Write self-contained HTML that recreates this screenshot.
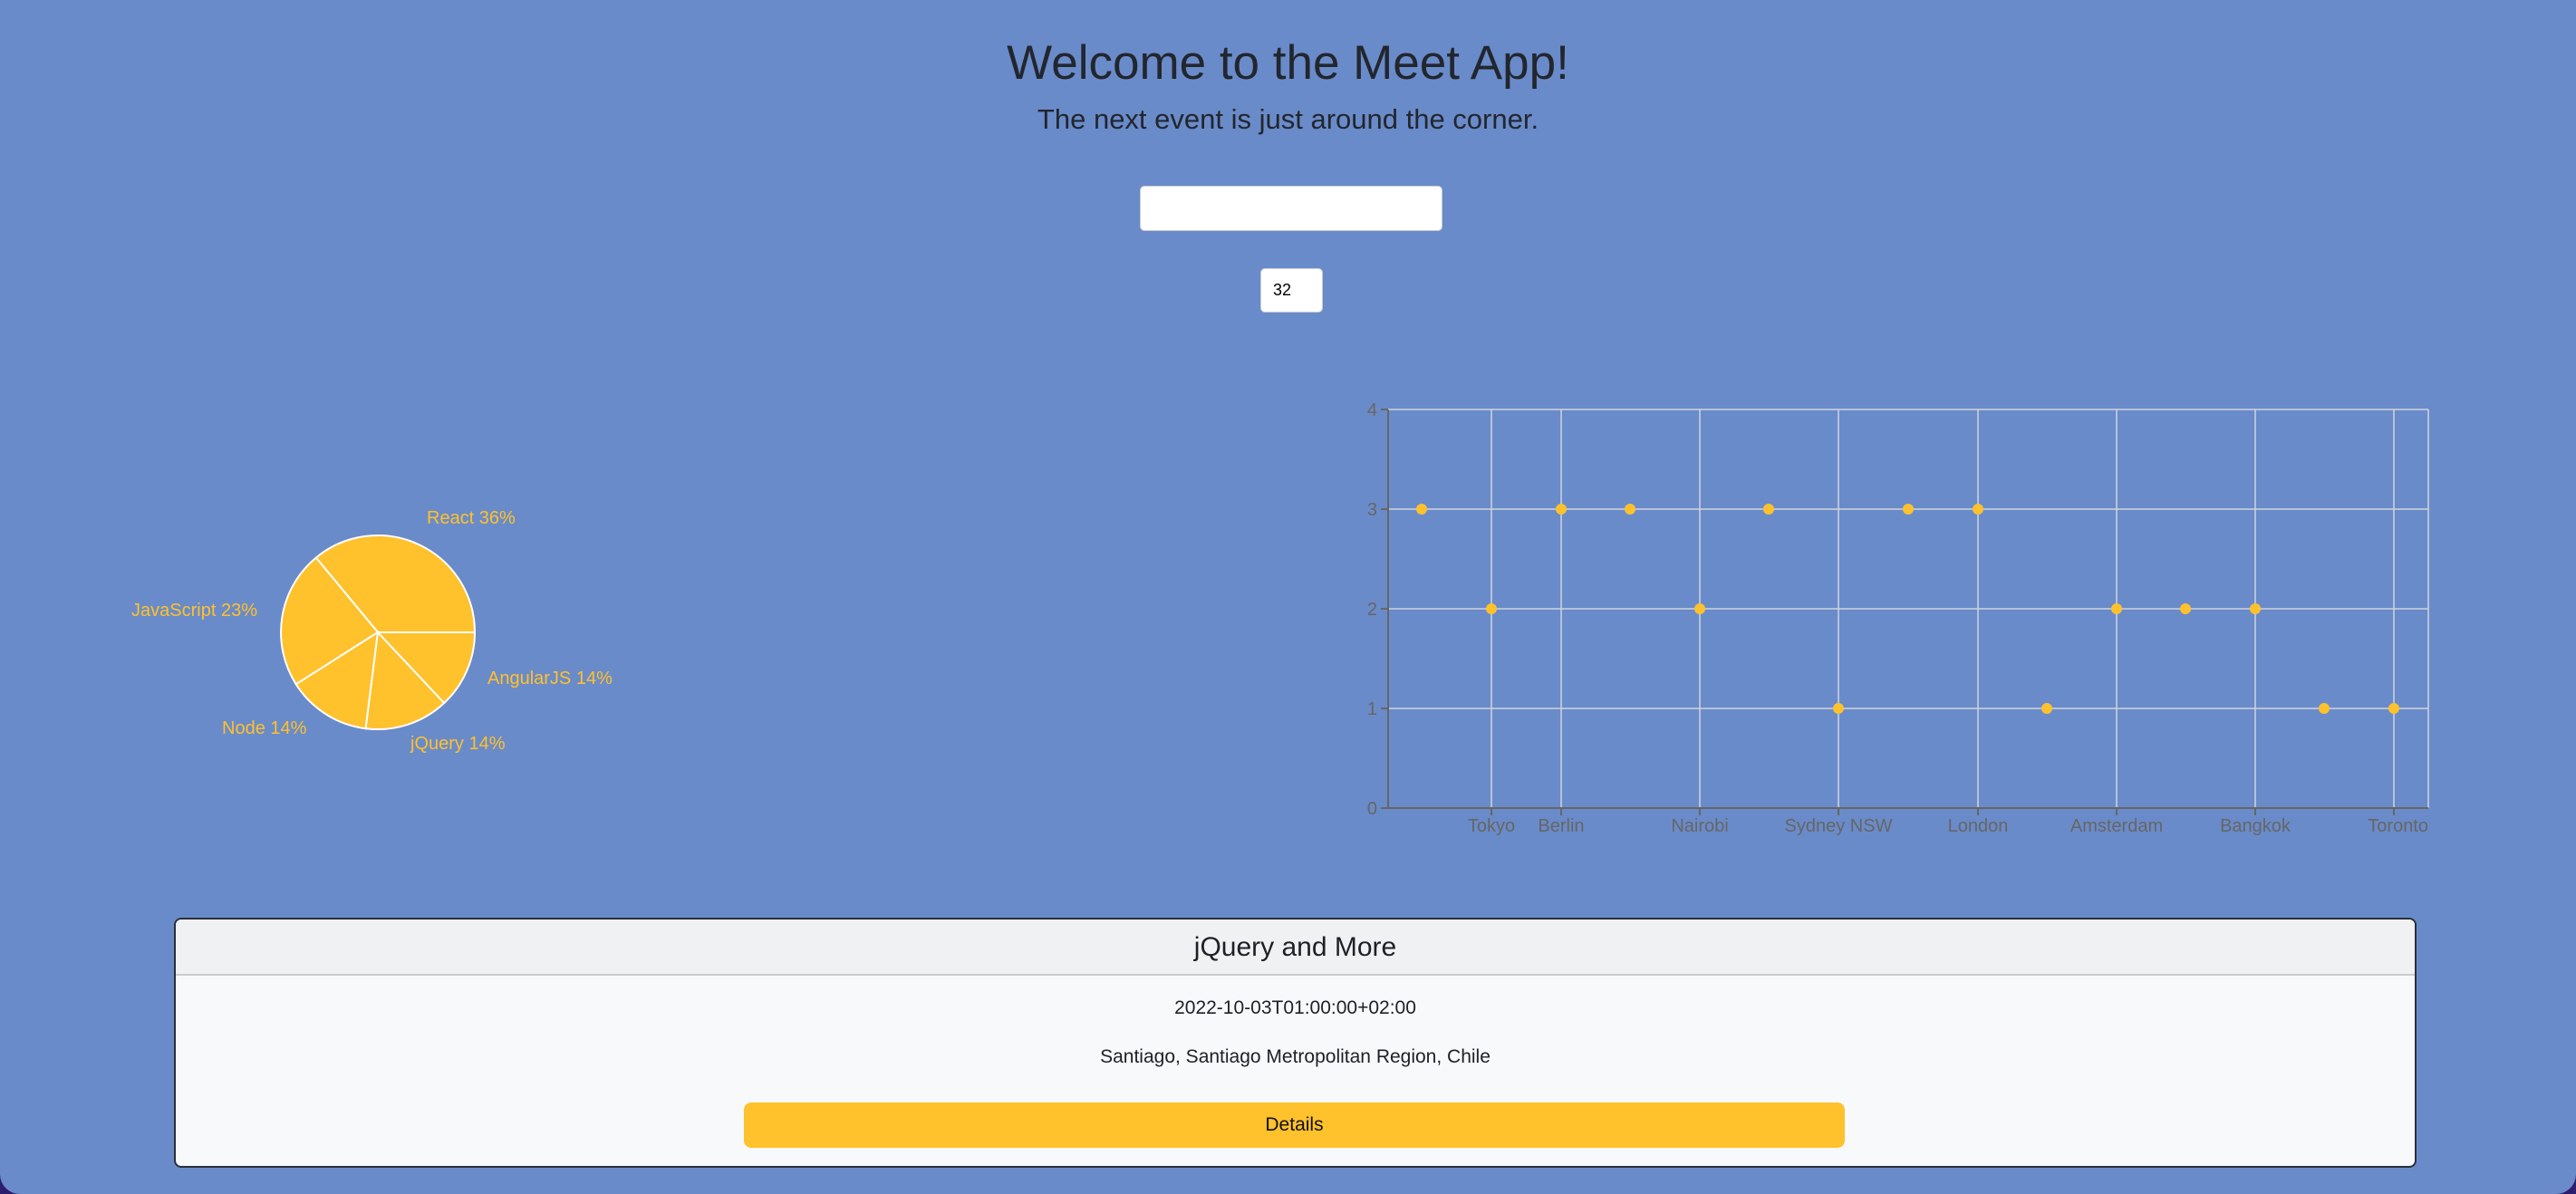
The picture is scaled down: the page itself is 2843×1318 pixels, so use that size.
<!DOCTYPE html>
<html><head><meta charset="utf-8"><style>
html,body{margin:0;padding:0;width:2843px;height:1318px;overflow:hidden;background:#2c1d6e;}
#f{position:absolute;left:0;top:0;width:2843px;height:1318px;background:#6a8bc9;border-radius:0 0 22px 22px;font-family:"Liberation Sans",sans-serif;}
.t{position:absolute;left:0;width:2843px;text-align:center;color:#22262e;}
.in{position:absolute;background:#fff;border:1px solid #c8ccd4;border-radius:5px;box-sizing:border-box;}
#card{position:absolute;left:192px;top:1013px;width:2475px;height:276px;border:2px solid #2a2f3a;border-radius:8px;background:#f8f9fa;box-sizing:border-box;overflow:hidden;}
#hd{height:60px;background:#eff1f3;border-bottom:2px solid #c9cbce;text-align:center;font-size:30px;line-height:62px;color:#1d2026;}
</style></head><body><div id="f">
<div class="t" style="top:38px;font-size:53px;line-height:64px;">Welcome to the Meet App!</div>
<div class="t" style="top:113px;font-size:31px;line-height:38px;">The next event is just around the corner.</div>
<div class="in" style="left:1258px;top:205px;width:334px;height:50px;"></div>
<div class="in" style="left:1391px;top:296px;width:69px;height:49px;font-size:18px;line-height:47px;padding-left:13px;color:#000;">32</div>
<svg width="2843" height="1000" style="position:absolute;left:0;top:0" font-family="Liberation Sans, sans-serif">
<g fill="#ffc12c" stroke="#fff" stroke-width="2">
<path d="M417 698 L524 698 A107 107 0 0 0 348.8 615.6 Z"/>
<path d="M417 698 L348.8 615.6 A107 107 0 0 0 326.7 755.3 Z"/>
<path d="M417 698 L326.7 755.3 A107 107 0 0 0 403.6 804.2 Z"/>
<path d="M417 698 L403.6 804.2 A107 107 0 0 0 490.2 776 Z"/>
<path d="M417 698 L490.2 776 A107 107 0 0 0 524 698 Z"/>
</g>
<g fill="#ffc12c" font-size="20">
<text x="471" y="578">React 36%</text>
<text x="284" y="680" text-anchor="end">JavaScript 23%</text>
<text x="538" y="755">AngularJS 14%</text>
<text x="245" y="810">Node 14%</text>
<text x="453" y="827">jQuery 14%</text>
</g>
<g stroke="#d0d4dc" stroke-width="1.5">
<line x1="1532" y1="452" x2="2680" y2="452"/><line x1="1532" y1="562" x2="2680" y2="562"/><line x1="1532" y1="672" x2="2680" y2="672"/><line x1="1532" y1="782" x2="2680" y2="782"/>
<line x1="1646" y1="452" x2="1646" y2="892"/><line x1="1723" y1="452" x2="1723" y2="892"/><line x1="1876" y1="452" x2="1876" y2="892"/><line x1="2029" y1="452" x2="2029" y2="892"/><line x1="2183" y1="452" x2="2183" y2="892"/><line x1="2336" y1="452" x2="2336" y2="892"/><line x1="2489" y1="452" x2="2489" y2="892"/><line x1="2642" y1="452" x2="2642" y2="892"/><line x1="2680" y1="452" x2="2680" y2="892"/>
</g>
<g stroke="#666" stroke-width="2">
<line x1="1532" y1="452" x2="1532" y2="892"/><line x1="1532" y1="892" x2="2680" y2="892"/>
<line x1="1524" y1="452" x2="1532" y2="452"/><line x1="1524" y1="562" x2="1532" y2="562"/><line x1="1524" y1="672" x2="1532" y2="672"/><line x1="1524" y1="782" x2="1532" y2="782"/><line x1="1524" y1="892" x2="1532" y2="892"/>
<line x1="1646" y1="892" x2="1646" y2="900"/><line x1="1723" y1="892" x2="1723" y2="900"/><line x1="1876" y1="892" x2="1876" y2="900"/><line x1="2029" y1="892" x2="2029" y2="900"/><line x1="2183" y1="892" x2="2183" y2="900"/><line x1="2336" y1="892" x2="2336" y2="900"/><line x1="2489" y1="892" x2="2489" y2="900"/><line x1="2642" y1="892" x2="2642" y2="900"/>
</g>
<g fill="#666" font-size="20" text-anchor="end">
<text x="1520" y="459">4</text><text x="1520" y="569">3</text><text x="1520" y="679">2</text><text x="1520" y="789">1</text><text x="1520" y="899">0</text>
</g>
<g fill="#666" font-size="20" text-anchor="middle">
<text x="1646" y="918">Tokyo</text><text x="1723" y="918">Berlin</text><text x="1876" y="918">Nairobi</text><text x="2029" y="918">Sydney NSW</text><text x="2183" y="918">London</text><text x="2336" y="918">Amsterdam</text><text x="2489" y="918">Bangkok</text><text x="2680" y="918" text-anchor="end">Toronto</text>
</g>
<g fill="#ffc12c">
<circle cx="1569" cy="562" r="6"/><circle cx="1646" cy="672" r="6"/><circle cx="1723" cy="562" r="6"/><circle cx="1799" cy="562" r="6"/><circle cx="1876" cy="672" r="6"/><circle cx="1952" cy="562" r="6"/><circle cx="2029" cy="782" r="6"/><circle cx="2106" cy="562" r="6"/><circle cx="2183" cy="562" r="6"/><circle cx="2259" cy="782" r="6"/><circle cx="2336" cy="672" r="6"/><circle cx="2412" cy="672" r="6"/><circle cx="2489" cy="672" r="6"/><circle cx="2565" cy="782" r="6"/><circle cx="2642" cy="782" r="6"/>
</g>
</svg>
<div id="card">
<div id="hd">jQuery and More</div>
<div style="position:absolute;top:86px;width:100%;text-align:center;font-size:21px;color:#1d2026;">2022-10-03T01:00:00+02:00</div>
<div style="position:absolute;top:140px;width:100%;text-align:center;font-size:21px;color:#1d2026;">Santiago, Santiago Metropolitan Region, Chile</div>
<div style="position:absolute;left:627px;top:202px;width:1215px;height:50px;background:#ffc12c;border-radius:8px;text-align:center;line-height:50px;font-size:21px;color:#111;">Details</div>
</div>
</div></body></html>
